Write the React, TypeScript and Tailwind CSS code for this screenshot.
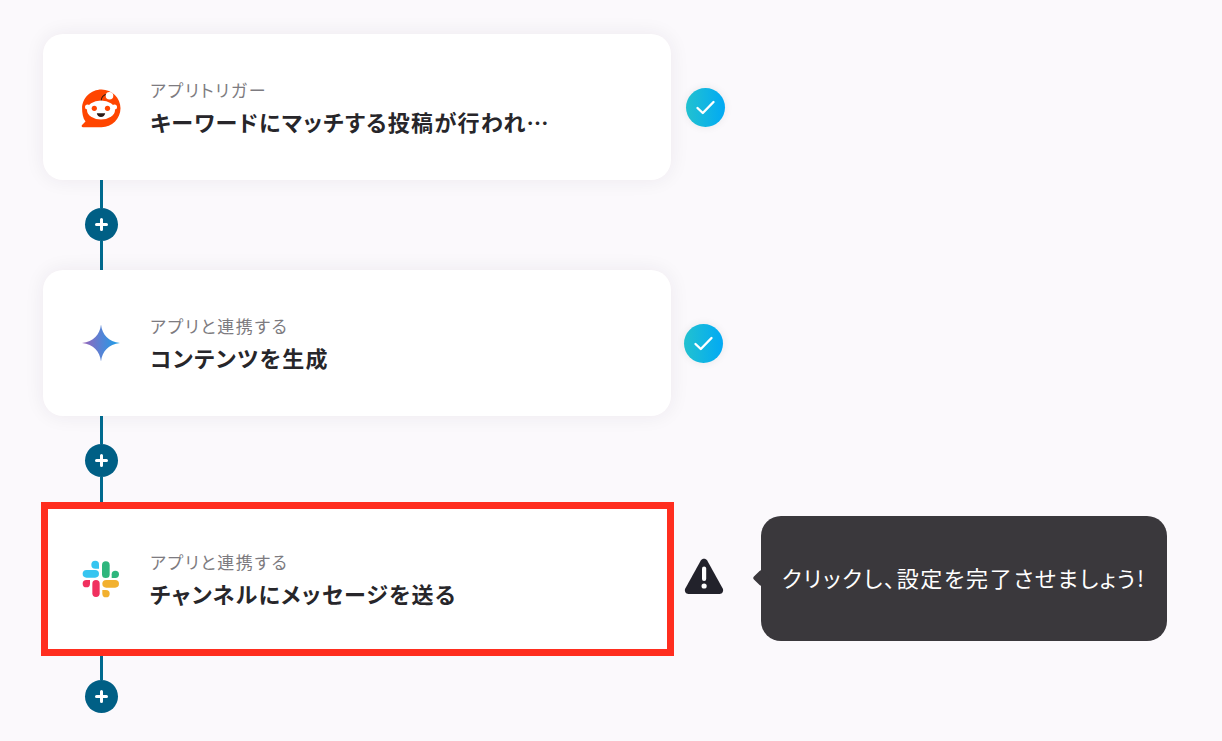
import React from "react";

const RedditIcon: React.FC = () => (
  <svg width="42" height="42" viewBox="80 87 42 42">
    <path d="M101.500 90.500c10.400 0 19 8.400 19 18.800s-8.600 19-19 19H83c-1.200 0-1.800-1.400-1-2.300l3.500-3.500c-2.700-3.300-3.400-8.600-3.400-13.200 0-10.400 9-18.800 19.400-18.800z" fill="#ff4500" />
    <path d="M101 102.500c.2-3.600 1.800-6.500 6-7.200" fill="none" stroke="#3a1a10" strokeWidth="1.100" strokeLinecap="round" />
    <circle cx="109.500" cy="96.800" r="3.800" fill="#fff" />
    <circle cx="87.500" cy="108" r="2.500" fill="#fff" />
    <circle cx="114.500" cy="108" r="2.500" fill="#fff" />
    <ellipse cx="101" cy="111" rx="14" ry="9.500" fill="#fff" />
    <circle cx="94.300" cy="109.300" r="2.600" fill="#ff4500" />
    <circle cx="107.500" cy="109.300" r="2.600" fill="#ff4500" />
    <path d="M96.800 114.200h8.400c-.3 2.400-2 3.800-4.200 3.800s-3.900-1.400-4.200-3.800z" fill="#2b1a16" />
  </svg>
);

const GeminiIcon: React.FC = () => (
  <svg width="40" height="40" viewBox="81 323.500 40 40">
    <defs>
      <linearGradient id="gem" x1="0" y1="0" x2="1" y2="0">
        <stop offset="0" stopColor="#9b63b8" />
        <stop offset="0.55" stopColor="#4f86d8" />
        <stop offset="1" stopColor="#1a9fe8" />
      </linearGradient>
    </defs>
    <path d="M101 325c1.200 10.200 7.400 17 19 18.500-11.600 1.500-17.800 8.300-19 18.500-1.200-10.200-7.400-17-19-18.500 11.600-1.500 17.800-8.300 19-18.500z" fill="url(#gem)" />
  </svg>
);

// viewBox is in 1/3 px units
const SlackIcon: React.FC = () => (
  <svg width="40" height="40" viewBox="63 40 120 120">
    <path d="M106 45a11 11 0 0 1 11 11v13h-11a12 12 0 0 1 0-24z" fill="#36c5f0" />
    <rect x="68" y="73" width="49" height="23" rx="11.500" fill="#36c5f0" />
    <rect x="126" y="47" width="23" height="50" rx="11.500" fill="#2eb67d" />
    <path d="M177 86a11 11 0 0 1-11 11h-11V86a11 11 0 0 1 22 0z" fill="#2eb67d" />
    <path d="M68 114a11 11 0 0 1 11-11h11v11a11 11 0 0 1-22 0z" fill="#f0305f" />
    <rect x="97" y="103" width="22" height="51" rx="11" fill="#f0305f" />
    <rect x="127" y="103" width="50" height="23" rx="11.500" fill="#f2b12f" />
    <path d="M138 155a11 11 0 0 1-11-11v-11h11a11 11 0 0 1 0 22z" fill="#f2b12f" />
  </svg>
);

const CheckBadge: React.FC<{ className: string }> = ({ className }) => (
  <div className={`flex h-[39px] w-[39px] shrink-0 items-center justify-center rounded-full bg-gradient-to-r from-[#22c1cf] to-[#03a9f4] shadow-[0_0_8px_rgba(0,0,0,0.08)] ${className}`}>
    <svg width="21" height="21" viewBox="0 0 21 21" fill="none" stroke="#fff" strokeWidth="2.400" strokeLinecap="round" strokeLinejoin="round">
      <path d="M2.500 11l5.300 5L18.500 5" />
    </svg>
  </div>
);

const WarningIcon: React.FC = () => (
  <svg width="40" height="37" viewBox="0 0 40 37" className="ml-[10px] -mt-[6px] shrink-0">
    <path d="M16.800 2.500c1.400-2.400 5-2.400 6.400 0l15.500 28c1.300 2.500-.4 5.500-3.200 5.500H4.500c-2.800 0-4.500-3-3.200-5.500z" fill="#22222b" />
    <rect x="18" y="8.500" width="4.200" height="14.500" rx="2.100" fill="#fff" />
    <circle cx="20.100" cy="28" r="2.600" fill="#fff" />
  </svg>
);

const Connector: React.FC<{ last?: boolean }> = ({ last }) => (
  <div className={`flex w-[33px] ml-[42px] flex-col items-center ${last ? "h-[89px]" : "h-[90px]"}`}>
    <div className={`w-[3px] bg-[#006a8e] ${last ? "h-[24px]" : "h-[28px]"}`} />
    <div className="flex h-[33px] w-[33px] shrink-0 items-center justify-center rounded-full bg-[#005f85]">
      <svg width="15" height="15" viewBox="0 0 15 15" stroke="#fff" strokeWidth="3" strokeLinecap="round">
        <path d="M7.500 2.500v10M2.500 7.500h10" />
      </svg>
    </div>
    {!last && <div className="w-[3px] flex-1 bg-[#006a8e]" />}
  </div>
);

const CardBody: React.FC<{ icon: React.ReactNode; label: string; title: string }> = ({ icon, label, title }) => (
  <>
    <div className="flex h-[42px] w-[42px] shrink-0 items-center justify-center">{icon}</div>
    <div className="ml-[28px] flex min-w-0 flex-col">
      <span className="text-[17px] leading-[24px] tracking-[1.7px] text-[#7d7b80]">{label}</span>
      <span className="mt-[3px] text-[22px] leading-[32px] tracking-[1.3px] font-bold text-[#27262a]">{title}</span>
    </div>
  </>
);

export default function App() {
  return (
    <div
      className="h-[741px] overflow-hidden bg-[#fbf9fc] pt-[34px] pl-[43px] [font-feature-settings:'palt']"
      style={{ fontFamily: '"Noto Sans CJK JP", "Noto Sans", sans-serif' }}
    >
      <div className="flex items-center">
        <div className="flex h-[146px] w-[628px] items-center rounded-[20px] bg-white pl-[37px] shadow-[0_0_20px_rgba(40,30,60,0.07)]">
          <CardBody icon={<RedditIcon />} label="アプリトリガー" title="キーワードにマッチする投稿が行われ…" />
        </div>
        <CheckBadge className="ml-[15px] mt-[1px]" />
      </div>
      <Connector />
      <div className="flex items-center">
        <div className="flex h-[146px] w-[628px] items-center rounded-[20px] bg-white pl-[37px] shadow-[0_0_20px_rgba(40,30,60,0.07)]">
          <CardBody icon={<GeminiIcon />} label="アプリと連携する" title="コンテンツを生成" />
        </div>
        <CheckBadge className="ml-[13px]" />
      </div>
      <Connector />
      <div className="-my-[4px] -ml-[2px] flex items-center">
        <div className="flex h-[154px] w-[633px] items-center border-[7px] border-[#ff2e1f] bg-white pl-[32px]">
          <CardBody icon={<SlackIcon />} label="アプリと連携する" title="チャンネルにメッセージを送る" />
        </div>
        <WarningIcon />
        <div className="relative ml-[37px] -mt-[2px] flex h-[125px] w-[406px] items-center rounded-[20px] bg-[#3a383c] pb-[2px] pl-[21px] text-[22px] tracking-[1.7px] text-white">
          <span className="absolute top-[56px] -left-[6px] h-[12px] w-[12px] rotate-45 rounded-[2px] bg-[#3a383c]" />
          クリックし、設定を完了させましょう!
        </div>
      </div>
      <div className="h-[4px]" />
      <Connector last />
    </div>
  );
}
